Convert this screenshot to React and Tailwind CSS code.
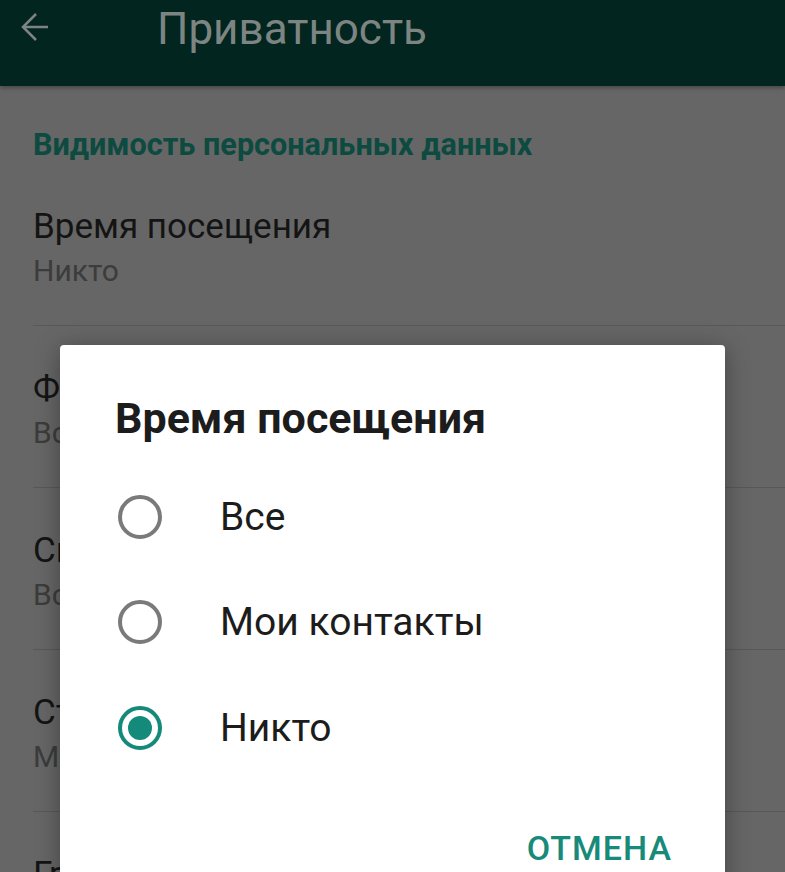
import { useState } from "react";

const rows = [
  { title: "Время посещения", value: "Никто" },
  { title: "Фото профиля", value: "Все" },
  { title: "Сведения", value: "Все" },
  { title: "Статус", value: "Мои контакты" },
  { title: "Группы", value: "Все" },
];

const options = ["Все", "Мои контакты", "Никто"];

function Radio({ checked }) {
  return (
    <span
      className={
        "flex h-[44px] w-[44px] shrink-0 items-center justify-center rounded-full border-[4px] " +
        (checked ? "border-[#148a7b]" : "border-[#7a7a7a]")
      }
    >
      {checked && <span className="h-[24px] w-[24px] rounded-full bg-[#148a7b]"></span>}
    </span>
  );
}

export default function App() {
  const [selected, setSelected] = useState("Никто");

  return (
    <div
      className="relative h-[872px] w-[785px] overflow-hidden bg-[#666666]"
      style={{ fontFamily: "Roboto, 'Noto Sans', sans-serif" }}
    >
      {/* Toolbar (dimmed) */}
      <div className="flex h-[86px] items-start bg-[#03251f] shadow-[0_2px_4px_rgba(0,0,0,0.3)]">
        <svg className="ml-[20px] mt-[10px] h-[34px] w-[30px]" viewBox="0 0 30 34" fill="none">
          <path d="M28 17H4M16 4L3 17L16 30" stroke="#7d8583" strokeWidth="2.5" />
        </svg>
        <h1 className="ml-[107px] mt-[1px] text-[44px] leading-[56px] text-[#7d8583]">Приватность</h1>
      </div>

      {/* Settings list (dimmed) */}
      <div className="pl-[33px]">
        <div className="h-[78px] pt-[43px] text-[30.6px] font-bold leading-[32px] text-[#0d4a40]">
          Видимость персональных данных
        </div>
        {rows.map((r) => (
          <div key={r.title} className="h-[162px] border-b border-[#585858] pt-[43px]">
            <div className="text-[35px] leading-[40px] text-[#141414]">{r.title}</div>
            <div className="mt-[8px] text-[30px] leading-[32px] text-[#3c3c3c]">{r.value}</div>
          </div>
        ))}
      </div>

      {/* Dialog */}
      <div className="absolute left-[60px] top-[345px] h-[560px] w-[665px] rounded-[4px] bg-white shadow-[0_4px_24px_rgba(0,0,0,0.35)]">
        <h2 className="pl-[55px] pt-[51px] text-[43px] font-bold leading-[44px] text-[#1c1c1c]">
          Время посещения
        </h2>
        <div className="mt-[24px]">
          {options.map((o) => (
            <button
              key={o}
              onClick={() => setSelected(o)}
              className="flex h-[105.5px] w-full items-center pl-[58px] text-left"
            >
              <Radio checked={selected === o} />
              <span className="ml-[58px] text-[39px] leading-[44px] text-[#1c1c1c]">{o}</span>
            </button>
          ))}
        </div>
        <div className="flex justify-end pr-[53px] pt-[47px]">
          <button className="text-[34px] font-medium leading-[40px] tracking-[1px] text-[#178a7a]">ОТМЕНА</button>
        </div>
      </div>
    </div>
  );
}
